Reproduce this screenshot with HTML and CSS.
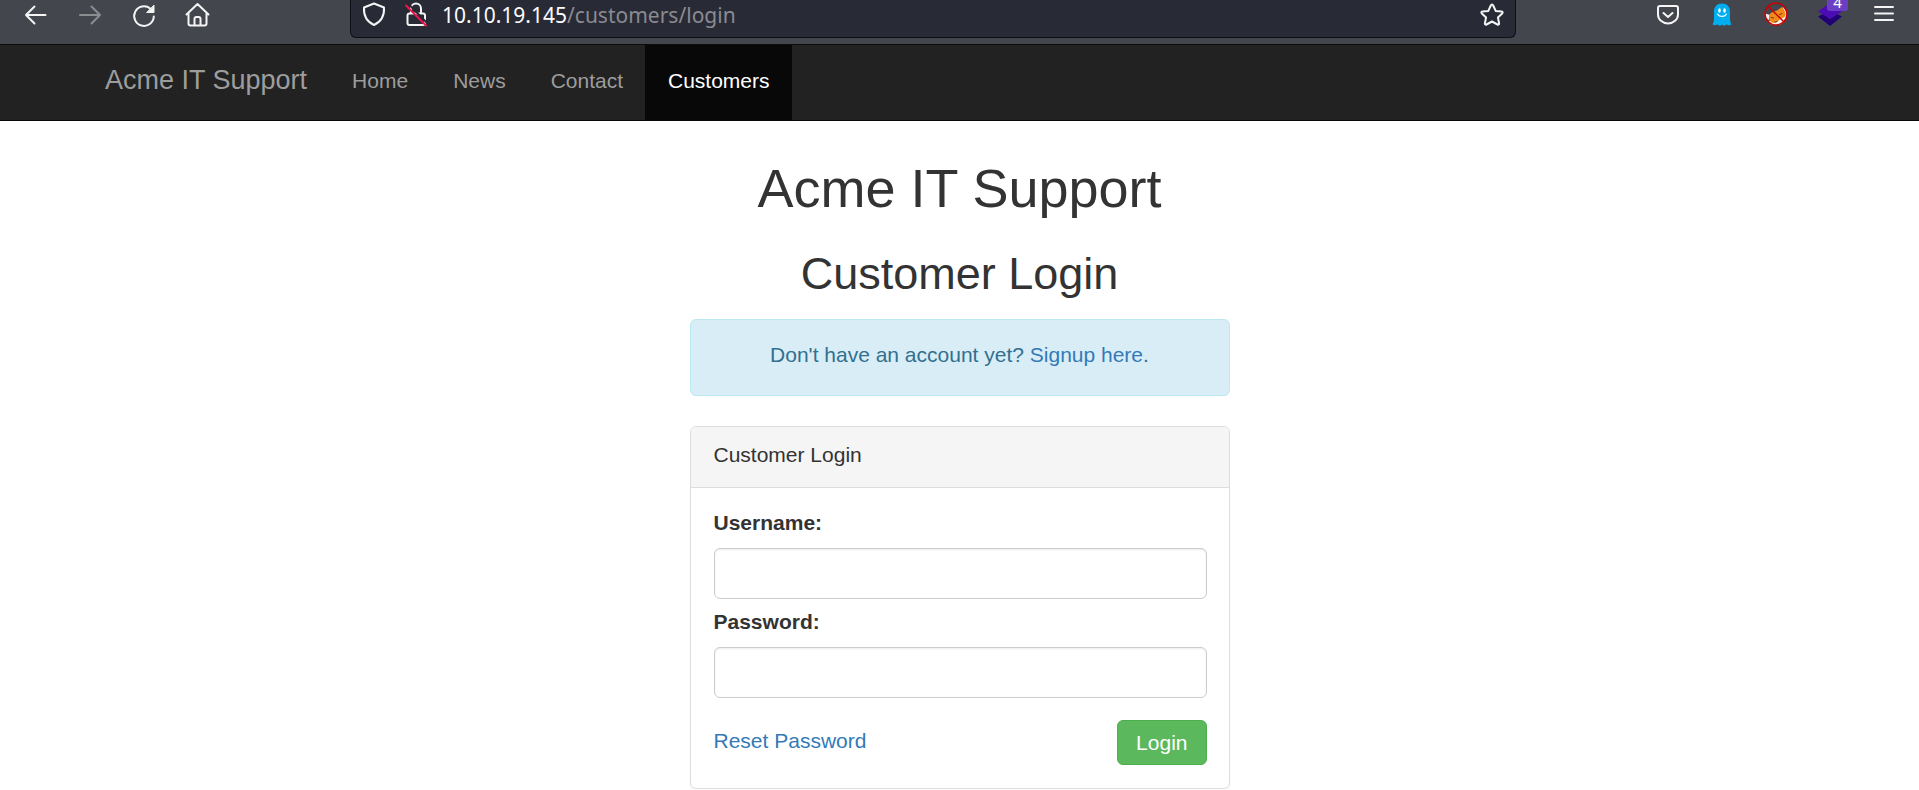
FILE: index.html
```html
<!DOCTYPE html>
<html lang="en">
<head>
<meta charset="utf-8">
<title>Acme IT Support - Customer Login</title>
<link rel="stylesheet" href="styles.css">
</head>
<body>
<div class="toolbar">
  <div class="tools">
    <button class="tool" type="button" aria-label="Back"><svg class="icon" viewBox="0 0 30 30"><path d="M24.500 15H5M13.500 6.500 5 15l8.500 8.500"/></svg></button>
    <button class="tool tool-off" type="button" aria-label="Forward"><svg class="icon" viewBox="0 0 30 30"><path d="M5 15H24.500M16.500 6.500 25 15 16.500 23.500"/></svg></button>
    <button class="tool" type="button" aria-label="Reload"><svg class="icon" viewBox="0 0 30 30"><path d="M21.200 8.500A9.800 9.800 0 1 0 24.800 16.500"/><path class="solid" d="M25 5.500v7h-7z"/></svg></button>
    <button class="tool" type="button" aria-label="Home"><svg class="icon" viewBox="0 0 30 30"><path d="M3.500 14.500 14.500 4l11 10.500M5.500 13v10.500q0 2 2 2h14q2 0 2-2V13M11.500 25v-6q0-2 2-2h2q2 0 2 2v6"/></svg></button>
  </div>
  <div class="urlbar">
    <svg class="icon" viewBox="0 0 30 30"><path d="M15 3.500 25 7.500c.5 8.500-2.500 14-10 17.500C7.500 21.500 4.500 16 5 7.500z"/></svg>
    <svg class="icon icon-lock" viewBox="0 0 30 30"><path d="M10 13.500V8.500a5 5 0 0 1 10 0v5M9 13.500h13q2 0 2 2v7.500q0 2-2 2H8.500q-2 0-2-2v-7.500q0-2 2-2"/><path class="slash-gap" d="M8 4.500 27 24"/><path class="slash" d="M5 5.500 25 25.500"/></svg>
    <span class="url"><span class="host">10.10.19.145</span>/customers/login</span>
    <button class="star" type="button" aria-label="Bookmark this page"><svg class="icon" viewBox="0 0 30 30"><path d="M15 4.500q.8 0 1.200 1l2.500 5.400 5.900.7q1.800.4.600 1.800l-4.300 4 1.200 5.900q0 1.800-1.600 1.200L15 21.500l-5.500 3q-1.600.6-1.600-1.200l1.200-5.900-4.300-4q-1.200-1.400.6-1.800l5.900-.7 2.500-5.400q.4-1 1.200-1z"/></svg></button>
  </div>
  <div class="tools">
    <button class="tool" type="button" aria-label="Pocket"><svg class="icon" viewBox="0 0 30 30"><path d="M7 6h16q2 0 2 2v6.500a10 9 0 0 1-20 0V8q0-2 2-2zM10.500 13l4.500 4 4.500-4"/></svg></button>
    <button class="tool" type="button" aria-label="Ghostery"><svg class="icon" viewBox="0 0 30 30"><path fill="#00aef0" stroke="none" d="M15 3.500c5 0 8 3.500 8 8v6c0 3 .3 5 1.500 7-2 1-3.500 1-4.800-.2-1.400 1.800-3 1.800-4.700.2-1.700 1.600-3.300 1.600-4.700-.2-1.300 1.200-2.800 1.200-4.800.2C6.700 22.500 7 20.500 7 17.500v-6c0-4.500 3-8 8-8z"/><ellipse fill="#fff" stroke="none" cx="12.500" cy="10.500" rx="1.300" ry="2.200"/><ellipse fill="#fff" stroke="none" cx="17.500" cy="10.500" rx="1.300" ry="2.200"/><path stroke="#fff" stroke-width="1.300" d="M10.800 14.200c1.500 3 6.900 3 8.400 0"/></svg></button>
    <button class="tool" type="button" aria-label="FoxyProxy"><svg class="icon" viewBox="0 0 30 30"><path fill="#f2f2f2" stroke="none" d="M4 13.500l5 1.500-1 5c-2.500-1-4-4-4-6.500zM22 7l3.500 5v6q-3 6-8 7h-6q-3-1-4-4l11-3z"/><path fill="#f08a1a" stroke="none" d="M8 15c2-3 5-3.500 8-4.500l5-3.500c2 2 3 4 3.500 7 0 3-2 4-5 5-2 2-4 4-7 4-3-.5-5-3.500-4.500-8z"/><path stroke="#7a3c06" stroke-width="1" d="M10 17.500l2.500.5M18.500 14.500l2.500-1M14 22l2-.5"/><circle class="ban" cx="15" cy="14" r="11"/><path class="ban" d="M7.200 6.200l15.600 15.600"/></svg></button>
    <button class="tool" type="button" aria-label="Extension, 4 items"><svg class="icon" viewBox="0 0 30 30"><path fill="#200073" stroke="none" d="M3 16.500l5-2.500 7 5 7-5 5 2.500-12 9.500z"/><path fill="#4c0bb3" stroke="none" d="M3 11.500 15 3l12 8.500-12 7.500z"/></svg><span class="badge">4</span></button>
    <button class="tool" type="button" aria-label="Menu"><svg class="icon" viewBox="0 0 30 30"><path d="M6 7h18M6 13.500h18M6 20h18"/></svg></button>
  </div>
</div>
<nav class="navbar">
  <div class="container nav-row">
    <a class="brand" href="#">Acme IT Support</a>
    <a class="nav-link" href="#">Home</a>
    <a class="nav-link" href="#">News</a>
    <a class="nav-link" href="#">Contact</a>
    <a class="nav-link active" href="#">Customers</a>
  </div>
</nav>
<main class="container">
  <h1>Acme IT Support</h1>
  <h2>Customer Login</h2>
  <div class="column">
    <p class="alert">Don't have an account yet? <a href="#">Signup here</a>.</p>
    <section class="panel">
      <div class="panel-heading">Customer Login</div>
      <form class="panel-body">
        <label for="username">Username:</label>
        <input id="username" name="username" type="text">
        <label for="password">Password:</label>
        <input id="password" name="password" type="password">
        <div class="actions">
          <a href="#">Reset Password</a>
          <button class="login" type="button">Login</button>
        </div>
      </form>
    </section>
  </div>
</main>
</body>
</html>
```
FILE: styles.css
```css
* {
  box-sizing: border-box;
}

body {
  margin: 0;
  background: #fff;
  color: #333;
  font-family: "Liberation Sans", Arial, sans-serif;
  font-size: 21px;
  line-height: 30px;
}

a {
  color: #337ab7;
  text-decoration: none;
}

button {
  border: 0;
  background: none;
  font: inherit;
}

/* Browser toolbar */
.toolbar {
  display: flex;
  align-items: flex-start;
  height: 45px;
  padding: 0 8px 0 9px;
  overflow: hidden;
  background: #44464e;
  border-bottom: 1px solid #0c0c0d;
}

.tools {
  display: flex;
}

.tool {
  position: relative;
  display: flex;
  justify-content: center;
  width: 54px;
  padding: 0;
}

.tool-off {
  opacity: 0.4;
}

.icon {
  display: block;
  flex: none;
  width: 30px;
  height: 30px;
  fill: none;
  stroke: #f4f4f4;
  stroke-width: 2;
  stroke-linecap: round;
  stroke-linejoin: round;
}

.icon .solid {
  fill: #f4f4f4;
  stroke-width: 1;
}

.icon .slash {
  stroke: #f0134d;
}

.icon .slash-gap {
  stroke: #282a36;
}

.icon .ban {
  stroke: #c00;
  stroke-width: 1.5;
}

.badge {
  position: absolute;
  top: -9px;
  right: 9px;
  width: 21px;
  height: 20px;
  border-radius: 3px;
  background: #6b3fc4;
  color: #fff;
  font: 15px/22px "Noto Sans", sans-serif;
}

.urlbar {
  display: flex;
  align-items: flex-start;
  flex: 1;
  height: 38px;
  margin: 0 125px;
  padding: 0 8px;
  background: #282a36;
  border: 1px solid #0e0f16;
  border-top: 0;
  border-radius: 0 0 6px 6px;
}

.icon-lock {
  margin-left: 12px;
}

.url {
  flex: 1;
  margin-left: 11px;
  color: #8a8b91;
  font-family: "Noto Sans", sans-serif;
}

.host {
  color: #fbfbfe;
}

.star {
  padding: 0;
}

/* Site navigation */
.container {
  max-width: 1755px;
  margin: 0 auto;
  padding: 0 23px;
}

.navbar {
  background: #222;
  border-bottom: 1px solid #080808;
}

.nav-row {
  display: flex;
}

.brand,
.nav-link {
  padding: 21px 22px 24px 23px;
  color: #9d9d9d;
}

.brand {
  padding: 20px 22px 25px 0;
  font-size: 27px;
}

.active {
  background: #080808;
  color: #fff;
}

/* Login page */
h1,
h2 {
  margin: 0;
  font-weight: 400;
  text-align: center;
}

h1 {
  padding-top: 37px;
  font-size: 54px;
  line-height: 60px;
}

h2 {
  margin: 31px 0 20px;
  font-size: 45px;
  line-height: 50px;
}

.column {
  max-width: 540px;
  margin: 0 auto;
}

.alert {
  margin: 0 0 30px;
  padding: 20px 22px 25px;
  background: #d9edf7;
  border: 1px solid #bce8f1;
  border-radius: 6px;
  color: #31708f;
  text-align: center;
}

.panel {
  border: 1px solid #ddd;
  border-radius: 6px;
  box-shadow: 0 1px 1px rgba(0, 0, 0, 0.05);
}

.panel-heading {
  padding: 13px 23px 17px;
  background: #f5f5f5;
  border-bottom: 1px solid #ddd;
  border-radius: 5px 5px 0 0;
}

.panel-body {
  padding: 20px 22px 23px 23px;
}

label {
  display: block;
  margin-bottom: 10px;
  font-weight: 700;
}

input {
  display: block;
  width: 100%;
  height: 51px;
  margin-bottom: 8px;
  padding: 9px 18px;
  background: #fff;
  border: 1px solid #ccc;
  border-radius: 6px;
  box-shadow: inset 0 1px 2px rgba(0, 0, 0, 0.08);
  color: #555;
  font: inherit;
}

.actions {
  display: flex;
  align-items: flex-start;
  justify-content: space-between;
  padding-top: 14px;
}

.actions a {
  padding-top: 6px;
}

.login {
  padding: 7px 18px 6px;
  background: #5cb85c;
  border: 1px solid #4cae4c;
  border-radius: 6px;
  color: #fff;
}
```
